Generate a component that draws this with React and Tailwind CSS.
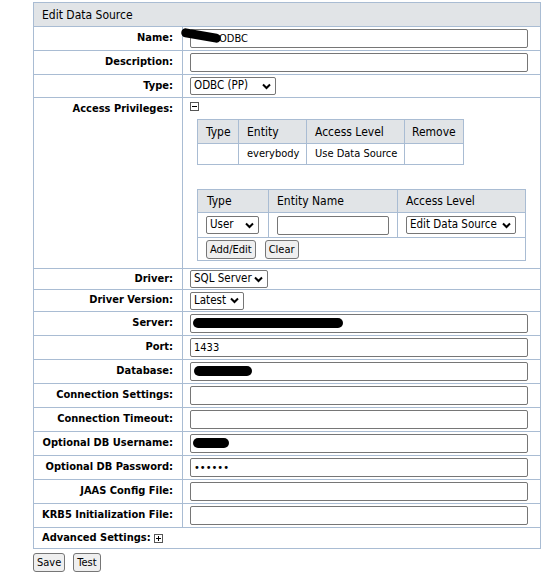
import React from "react";

const line = "border-[#a9bcd3]";

function Chevron() {
  return (
    <svg width="9" height="7" viewBox="0 0 9 7" className="shrink-0">
      <path d="M1 1.5 L4.5 5 L8 1.5" fill="none" stroke="#000" strokeWidth="2" />
    </svg>
  );
}

function Select({ value, w }) {
  return (
    <div
      className={`${w} h-[18px] inline-flex items-center justify-between gap-[2px] whitespace-nowrap border border-[#767676] rounded-[2px] bg-white pl-[3px] pr-[4px] text-[11.5px]`}
    >
      <span>{value}</span>
      <Chevron />
    </div>
  );
}

function TextInput({ value = "", w = "w-[338px]", type = "text", pad = "px-[3px]" }) {
  return (
    <input
      type={type}
      defaultValue={value}
      className={`${w} h-[19px] border border-[#767676] rounded-[2px] bg-white ${pad} text-[11px] outline-none`}
    />
  );
}

function Btn({ children }) {
  return (
    <button className="h-[19px] px-[3px] border border-[#767676] rounded-[3px] bg-[#efefef] text-[11px] leading-none">
      {children}
    </button>
  );
}

function Box({ sign }) {
  return (
    <span className="w-[9px] h-[9px] border border-[#555] flex items-center justify-center relative">
      <span className="w-[5px] h-px bg-black" />
      {sign === "+" && <span className="absolute w-px h-[5px] bg-black" />}
    </span>
  );
}

function Row({ label, h = "h-6", top, children }) {
  return (
    <div className={`grid grid-cols-[149px_1fr] border-b ${line} ${h}`}>
      <div
        className={`border-r ${line} pr-[9px] font-bold flex justify-end ${
          top ? "items-start pt-[3px]" : "items-center"
        }`}
      >
        {label}
      </div>
      <div className={`pl-[7px] flex ${top ? "flex-col" : "items-center"}`}>{children}</div>
    </div>
  );
}

export default function App() {
  return (
    <div className="bg-white min-h-screen font-['Tahoma','DejaVu_Sans_Condensed','DejaVu_Sans',sans-serif] text-[11px] text-black pt-[2px]">
      <div className={`ml-[33px] w-[508px] border ${line}`}>
        <div className={`h-6 bg-[#e1e4e7] border-b ${line} flex items-center pl-[8px] text-[12px]`}>
          Edit Data Source
        </div>

        <Row label="Name:">
          <div className="relative">
            <TextInput value="ODBC" pad="pl-[28px] pr-[3px]" />
            <span className="absolute -left-[9px] top-[2px] w-[40px] h-[9px] bg-black rounded-full rotate-[10deg]" />
          </div>
        </Row>
        <Row label="Description:">
          <TextInput />
        </Row>
        <Row label="Type:" h="h-[23px]">
          <Select value="ODBC (PP)" w="w-[86px]" />
        </Row>

        <Row label="Access Privileges:" h="h-[171px]" top>
          <div className="pt-[4px]">
            <Box sign="-" />
          </div>

          <div className={`mt-[8px] ml-[7px] w-[267px] border ${line}`}>
            <div className={`grid grid-cols-[41px_68px_98px_1fr] h-[24px] bg-[#e1e4e7] border-b ${line} text-[12px]`}>
              <div className={`border-r ${line} flex items-center pl-[8px]`}>Type</div>
              <div className={`border-r ${line} flex items-center pl-[8px]`}>Entity</div>
              <div className={`border-r ${line} flex items-center pl-[8px]`}>Access Level</div>
              <div className="flex items-center pl-[7px]">Remove</div>
            </div>
            <div className="grid grid-cols-[41px_68px_98px_1fr] h-[20px]">
              <div className={`border-r ${line}`} />
              <div className={`border-r ${line} flex items-center pl-[8px]`}>everybody</div>
              <div className={`border-r ${line} flex items-center pl-[8px]`}>Use Data Source</div>
              <div />
            </div>
          </div>

          <div className={`mt-[24px] ml-[7px] w-[329px] border ${line}`}>
            <div className={`grid grid-cols-[71px_129px_1fr] h-[23px] bg-[#e1e4e7] border-b ${line} text-[12px]`}>
              <div className={`border-r ${line} flex items-center pl-[9px]`}>Type</div>
              <div className={`border-r ${line} flex items-center pl-[8px]`}>Entity Name</div>
              <div className="flex items-center pl-[8px]">Access Level</div>
            </div>
            <div className={`grid grid-cols-[71px_129px_1fr] h-[25px] border-b ${line}`}>
              <div className={`border-r ${line} flex items-center pl-[8px]`}>
                <Select value="User" w="w-[53px]" />
              </div>
              <div className={`border-r ${line} flex items-center pl-[8px]`}>
                <TextInput w="w-[112px]" />
              </div>
              <div className="flex items-center pl-[8px]">
                <Select value="Edit Data Source" w="w-[110px]" />
              </div>
            </div>
            <div className="h-[22px] flex items-center gap-[9px] pl-[8px]">
              <Btn>Add/Edit</Btn>
              <Btn>Clear</Btn>
            </div>
          </div>
        </Row>

        <Row label="Driver:" h="h-[21px]">
          <Select value="SQL Server" w="w-[78px]" />
        </Row>
        <Row label="Driver Version:" h="h-[22px]">
          <Select value="Latest" w="w-[54px]" />
        </Row>
        <Row label="Server:">
          <div className="relative">
            <TextInput />
            <span className="absolute left-[3px] top-[4px] w-[150px] h-[10px] bg-black rounded-full" />
          </div>
        </Row>
        <Row label="Port:">
          <TextInput value="1433" />
        </Row>
        <Row label="Database:">
          <div className="relative">
            <TextInput />
            <span className="absolute left-[4px] top-[4px] w-[58px] h-[10px] bg-black rounded-full" />
          </div>
        </Row>
        <Row label="Connection Settings:">
          <TextInput />
        </Row>
        <Row label="Connection Timeout:">
          <TextInput />
        </Row>
        <Row label="Optional DB Username:">
          <div className="relative">
            <TextInput />
            <span className="absolute left-[3px] top-[4px] w-[36px] h-[10px] bg-black rounded-full" />
          </div>
        </Row>
        <Row label="Optional DB Password:">
          <TextInput type="password" value="secret" />
        </Row>
        <Row label="JAAS Config File:">
          <TextInput />
        </Row>
        <Row label="KRB5 Initialization File:">
          <TextInput />
        </Row>

        <div className="h-[20px] flex items-center pl-[8px] gap-[3px] font-bold">
          Advanced Settings: <Box sign="+" />
        </div>
      </div>

      <div className="ml-[33px] mt-[4px] flex gap-[8px]">
        <Btn>Save</Btn>
        <Btn>Test</Btn>
      </div>
    </div>
  );
}
